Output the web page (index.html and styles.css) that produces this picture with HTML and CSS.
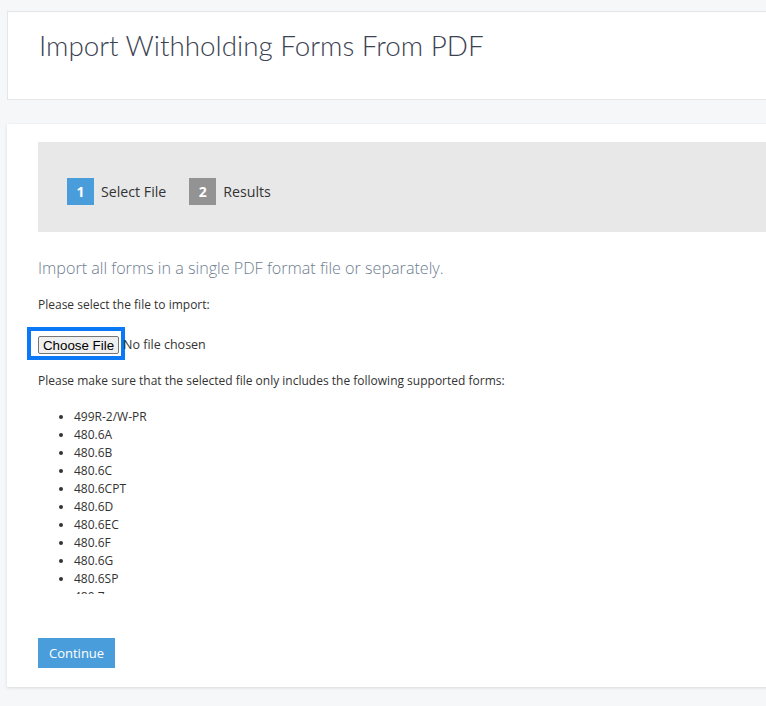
FILE: index.html
```html
<!DOCTYPE html>
<html>
<head>
<meta charset="utf-8">
<link rel="stylesheet" href="styles.css">
</head>
<body>
<div class="page">
  <div class="card header-card">
    <h1 class="title">Import Withholding Forms From PDF</h1>
  </div>
  <div class="card main-card">
    <div class="steps">
      <div class="step">
        <span class="step-num active">1</span>
        <span class="step-label">Select File</span>
      </div>
      <div class="step">
        <span class="step-num">2</span>
        <span class="step-label">Results</span>
      </div>
    </div>
    <p class="lead">Import all forms in a single PDF format file or separately.</p>
    <p class="text select">Please select the file to import:</p>
    <div class="file-row">
      <span class="file-focus"><span class="file-btn">Choose File</span></span>
      <span class="file-name">No file chosen</span>
    </div>
    <p class="text note">Please make sure that the selected file only includes the following supported forms:</p>
    <div class="forms-scroll">
      <ul class="forms">
        <li>499R-2/W-PR</li>
        <li>480.6A</li>
        <li>480.6B</li>
        <li>480.6C</li>
        <li>480.6CPT</li>
        <li>480.6D</li>
        <li>480.6EC</li>
        <li>480.6F</li>
        <li>480.6G</li>
        <li>480.6SP</li>
        <li>480.7</li>
        <li>480.7A</li>
      </ul>
    </div>
    <button class="btn-continue">Continue</button>
  </div>
</div>
</body>
</html>
```
FILE: styles.css
```css
html, body {
  margin: 0;
  padding: 0;
  overflow: hidden;
  background: #f6f7f9;
}
body {
  font-family: "Open Sans", "Liberation Sans", sans-serif;
  font-size: 12px;
  color: #333;
}
.page {
  padding: 11px 0 20px 7px;
  width: 800px;
  display: flex;
  flex-direction: column;
  gap: 24px;
}
.card {
  background: #fff;
}
.header-card {
  border: 1px solid #e4e6e9;
  height: 87px;
  padding: 0 31px;
  box-sizing: content-box;
}
.title {
  margin: 0;
  padding-top: 17px;
  font-family: "Lato", "Open Sans", sans-serif;
  font-weight: 300;
  font-size: 27.8px;
  line-height: 34px;
  color: #3b4252;
}
.main-card {
  padding: 18px 0 19px 31px;
  box-shadow: 0 1px 3px rgba(0,0,0,0.12);
}
.steps {
  background: #e8e8e8;
  height: 90px;
  box-sizing: border-box;
  padding: 36px 29px 27px;
  display: flex;
  gap: 23px;
}
.step {
  display: flex;
  align-items: center;
  gap: 7px;
  height: 27px;
}
.step-num {
  width: 27px;
  height: 27px;
  background: #939393;
  color: #fff;
  font-weight: 700;
  font-size: 14px;
  display: flex;
  align-items: center;
  justify-content: center;
}
.step-num.active {
  background: #4a9ddb;
}
.step-label {
  font-size: 14.2px;
  color: #333;
}
.lead {
  margin: 25px 0 0;
  font-size: 16.15px;
  font-weight: 300;
  line-height: 22px;
  color: #6d7d90;
}
.text {
  margin: 15px 0 0;
  line-height: 18px;
}
.text.select {
  margin-top: 17px;
}
.file-row {
  margin-top: 17px;
  display: flex;
  align-items: flex-start;
  height: 25px;
}
.file-focus {
  margin-left: -7px;
  padding: 5px 2px 2px 7px;
  outline: 4px solid #0b78f5;
  display: inline-flex;
}
.file-btn {
  font-family: "Liberation Sans", Arial, sans-serif;
  font-size: 13.33px;
  color: #000;
  background: #efefef;
  border: 1px solid #767676;
  border-radius: 2px;
  height: 18px;
  width: 81px;
  box-sizing: border-box;
  display: flex;
  align-items: center;
  justify-content: center;
}
.file-name {
  margin-left: 2px;
  padding-top: 5px;
  font-family: "Open Sans", sans-serif;
  font-size: 12.5px;
  line-height: 18px;
  color: #333;
}
.note {
  margin-top: 16px;
}
.forms-scroll {
  height: 204px;
  overflow: hidden;
}
.forms {
  margin: 18px 0 0;
  padding-left: 36px;
  line-height: 18px;
}
.btn-continue {
  display: block;
  margin-top: 44px;
  background: #4a9ddb;
  color: #fff;
  border: none;
  font-family: "Open Sans", sans-serif;
  font-size: 13px;
  height: 30px;
  padding: 0 11px;
}
```
